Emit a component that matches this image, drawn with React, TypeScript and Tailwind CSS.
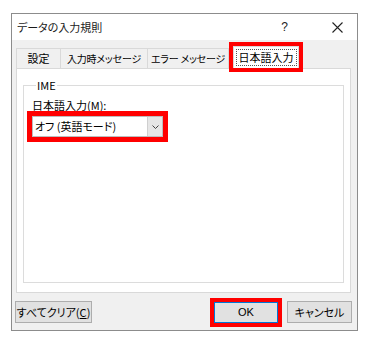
import React from "react";

const font = "font-['Meiryo_UI','Noto_Sans_CJK_JP',sans-serif] [font-feature-settings:'palt']";

export default function App() {
  return (
    <div className={`w-[368px] h-[342px] bg-white pt-[13px] pl-[11px] text-[11px] text-black leading-none whitespace-nowrap ${font}`}>
      <div className="w-[347px] h-[318px] border border-[#8c8c8c] bg-[#f0f0f0] flex flex-col">
        {/* title bar */}
        <div className="h-[26px] bg-white flex items-center pl-[5px] shrink-0">
          <span className="text-[11px] text-[#1a1a1a]">データの入力規則</span>
          <span className="ml-auto mr-[44px] text-[12px] text-[#222] font-['Liberation_Sans',sans-serif]">?</span>
          <svg width="11" height="11" viewBox="0 0 11 11" className="mr-[14px]">
            <path d="M0.5 0.5 L10.5 10.5 M10.5 0.5 L0.5 10.5" stroke="#222" strokeWidth="1.1" />
          </svg>
        </div>
        {/* body */}
        <div className="flex flex-col pl-[4px] pr-[5px] pt-[6px]">
          {/* tabs */}
          <div className="flex items-end h-[22px] relative z-10">
            <div className="w-[45px] h-[20px] border border-b-0 border-[#d9d9d9] bg-[#f0f0f0] flex items-center justify-center">設定</div>
            <div className="w-[87px] h-[20px] border border-b-0 border-l-0 border-[#d9d9d9] bg-[#f0f0f0] flex items-center justify-center text-[10px] tracking-[-0.2px]">入力時メッセージ</div>
            <div className="w-[81px] h-[20px] border border-b-0 border-l-0 border-[#d9d9d9] bg-[#f0f0f0] flex items-center justify-center text-[10px] tracking-[-0.2px]">エラー メッセージ</div>
            <div className="ml-[4px] w-[66px] h-[22px] bg-white border border-b-0 border-[#d9d9d9] flex items-center justify-center outline-[4px] outline-solid outline-[#ff0000]">
              <span className="border border-dotted border-[#555] px-[2px] py-[2px]">日本語入力</span>
            </div>
          </div>
          {/* panel */}
          <div className="w-[335px] h-[225px] border border-[#d9d9d9] bg-white px-[6px] pt-[8px]">
            <fieldset className="w-[321px] h-[206px] border border-[#dcdcdc] pl-[8px] pt-[3px]">
              <legend className="ml-[4px] px-[1px] text-[11px] leading-[16px]">IME</legend>
              <div className="mt-[2px] leading-[14px]">日本語入力(<span className="underline">M</span>):</div>
              <div className="mt-[4px] w-[131px] h-[21px] border border-[#bdbdbd] bg-white flex items-stretch outline-[5px] outline-solid outline-[#ff0000]">
                <div className="flex-1 flex items-center pl-[2px]">オフ (英語モード)</div>
                <div className="w-[15px] bg-[#e6e6e6] border-l border-[#cfcfcf] flex items-center justify-center">
                  <svg width="7" height="4" viewBox="0 0 7 4">
                    <path d="M0.5 0.5 L3.5 3.5 L6.5 0.5" stroke="#444" strokeWidth="1" fill="none" />
                  </svg>
                </div>
              </div>
            </fieldset>
          </div>
        </div>
        {/* buttons */}
        <div className="flex items-center pl-[3px] pr-[5px] mt-[8px]">
          <div className="w-[77px] h-[22px] border border-[#adadad] bg-[#e1e1e1] flex items-center justify-center">
            すべてクリア(<span className="underline">C</span>)
          </div>
          <div className="ml-auto w-[64px] h-[21px] border-[1.5px] border-[#0078d7] bg-[#e1e1e1] flex items-center justify-center outline-[4px] outline-solid outline-[#ff0000] font-['Liberation_Sans',sans-serif] text-[11px]">
            OK
          </div>
          <div className="ml-[9px] w-[65px] h-[22px] border border-[#adadad] bg-[#e1e1e1] flex items-center justify-center">
            キャンセル
          </div>
        </div>
      </div>
    </div>
  );
}
